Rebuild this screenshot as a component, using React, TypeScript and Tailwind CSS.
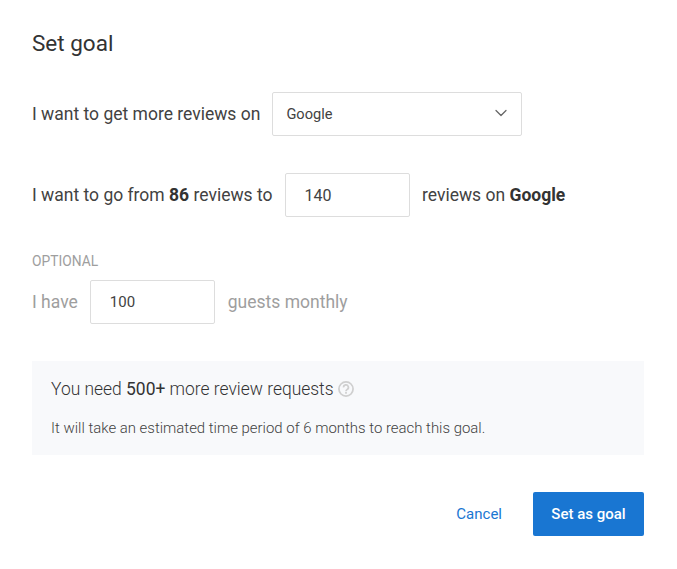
import React from 'react';
import { ChevronDown } from 'lucide-react';

function Field({ value, className }: { value: string; className: string }) {
  return (
    <div className={`w-[125px] h-11 flex items-center pl-[19px] bg-white border border-[#dddddd] rounded-[2px] ${className}`}>
      {value}
    </div>
  );
}

export default function App() {
  return (
    <div className="w-[677px] h-[569px] bg-white px-8 pt-[27px] font-['Roboto',sans-serif] text-[#424242] overflow-hidden">
      <h1 className="text-[22.5px] leading-[32px] font-normal text-[#333333]">Set goal</h1>

      {/* rows */}
      <div className="mt-[33px] flex items-center h-11 text-[17.5px]">
        <span>I want to get more reviews on</span>
        <div className="ml-3 w-[250px] h-11 flex items-center justify-between pl-[13px] pr-[10px] border border-[#dddddd] rounded-[2px] text-[14.6px]">
          <span className="mt-px">Google</span>
          <ChevronDown className="w-5 h-5 text-[#666666] -mt-[2px]" strokeWidth={1.5} />
        </div>
      </div>

      <div className="mt-[37px] flex items-center h-11 text-[17.5px]">
        <span>I want to go from <b className="font-bold text-[#333333]">86</b> reviews to</span>
        <Field value="140" className="ml-3 text-base pt-px" />
        <span className="ml-[12.5px]">reviews on <b className="font-bold text-[#333333]">Google</b></span>
      </div>

      <div className="mt-[36px] text-[13.8px] leading-4 text-[#9e9e9e]">OPTIONAL</div>
      <div className="mt-[11px] flex items-center h-11 text-[17.5px] text-[#9e9e9e]">
        <span>I have</span>
        <Field value="100" className="ml-3 text-[15px] pt-px text-[#424242]" />
        <span className="ml-3 pl-px">guests monthly</span>
      </div>

      <div className="mt-[37px] w-[612px] h-[94px] bg-[#f8f9fb] pl-[19px] pt-[16px]">
        <div className="flex items-center text-[17.45px] leading-6 font-light text-[#333333]">
          <span>You need <span className="font-normal">500+</span> more review requests</span>
          <svg className="ml-[4px] w-4 h-4 text-[#cfcfcf]" viewBox="0 0 24 24" fill="none" stroke="currentColor" strokeWidth="2.6">
            <circle cx="12" cy="12" r="10.6" />
            <path d="M8.4 9.6a3.6 3.6 0 1 1 5.4 3c-1.2.8-1.8 1.3-1.8 2.6" />
            <path d="M12 16.6v2.4" />
          </svg>
        </div>
        <p className="mt-[17px] text-[14.95px] leading-5 font-light text-[#424242]">
          It will take an estimated time period of 6 months to reach this goal.
        </p>
      </div>

      <div className="mt-[37px] w-[612px] flex items-center justify-end">
        <button className="text-[15px] text-[#1976d2] mr-[31px]">Cancel</button>
        <button className="w-[111px] h-11 bg-[#1976d2] rounded-[2px] text-[15px] font-medium text-white">Set as goal</button>
      </div>
    </div>
  );
}
